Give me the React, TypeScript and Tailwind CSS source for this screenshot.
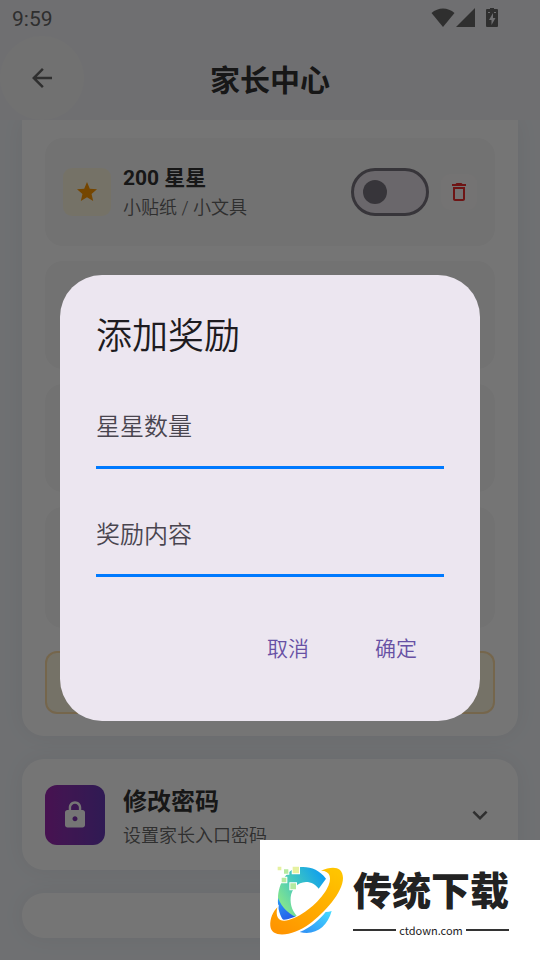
import { useState } from 'react';
import {
  MdArrowBack,
  MdDeleteOutline,
  MdExpandMore,
  MdLock,
  MdStar,
} from 'react-icons/md';

function StatusBar() {
  return (
    <div className="flex h-9 items-center justify-between pl-3 pr-[42px] text-[#666]">
      <span className="pt-[2px] font-[Roboto] text-[21px] leading-9">9:59</span>
      <div className="flex items-center">
        <svg width="24" height="20" viewBox="0 0 24 20" fill="currentColor">
          <path d="M12 19 0.5 5C7-1 17-1 23.5 5z" />
        </svg>
        <svg className="ml-px" width="20" height="20" viewBox="0 0 20 20" fill="currentColor">
          <path d="M0 19 19 0v19z" />
        </svg>
        <svg className="ml-[10px]" width="12" height="20" viewBox="0 0 12 20">
          <path fill="currentColor" d="M4 0h4v1h3q1 0 1 1v16q0 1-1 1H1q-1 0-1-1V2q0-1 1-1h3z" />
          <path fill="#f2f2f7" d="M7 5 3 12h2.5v5L9.5 10H7zM2 4h2v1H2zM8 4h2v1H8z" />
        </svg>
      </div>
    </div>
  );
}

function RewardRow() {
  const [enabled, setEnabled] = useState(false);

  return (
    <div className="flex h-[108px] items-center rounded-[18px] bg-[#f8f8f8] px-[18px]">
      <div className="flex size-12 items-center justify-center rounded-[9px] bg-[#fff8e1] text-[#ff9800]">
        <MdStar size={24} />
      </div>
      <div className="ml-3 flex-1">
        <div className="text-[21px] leading-8 font-bold text-[#333]">200 星星</div>
        <div className="text-[18px] leading-7 font-[350] text-[#666]">小贴纸 / 小文具</div>
      </div>
      <button
        type="button"
        role="switch"
        aria-checked={enabled}
        aria-label="200 星星"
        onClick={() => setEnabled(!enabled)}
        className="flex h-12 w-[78px] items-center rounded-full border-3 border-[#79747e] bg-[#e6e0e9] px-[9px]"
      >
        <span className={enabled ? 'ml-auto size-6 rounded-full bg-[#6750a4]' : 'size-6 rounded-full bg-[#79747e]'} />
      </button>
      <button
        type="button"
        aria-label="删除"
        className="ml-3 flex size-9 items-center justify-center rounded-[9px] bg-[#fdfafa] text-[#f02f2f]"
      >
        <MdDeleteOutline size={24} />
      </button>
    </div>
  );
}

function Field({ label }: { label: string }) {
  const [value, setValue] = useState('');

  return (
    <input
      type="text"
      aria-label={label}
      placeholder={label}
      value={value}
      onChange={e => setValue(e.target.value)}
      className="block h-[86px] w-full border-b-3 border-[#007aff] bg-transparent pt-1 text-[24px] font-[350] text-[#1d1b20] outline-none placeholder:text-[#49454f]"
    />
  );
}

function AddRewardDialog() {
  return (
    <div className="absolute inset-0 z-10 flex items-center justify-center bg-black/54 px-[60px] pt-9">
      <div role="dialog" aria-labelledby="dialog-title" className="w-full rounded-[42px] bg-[#ece6f0] p-9">
        <h2 id="dialog-title" className="text-[36px] leading-[52px] font-[350] text-[#1d1b20]">
          添加奖励
        </h2>
        <div className="mt-5 flex flex-col gap-[22px]">
          <Field label="星星数量" />
          <Field label="奖励内容" />
        </div>
        <div className="mt-9 flex justify-end gap-3 text-[21px] font-[350] text-[#6750a4]">
          <button type="button" className="h-[72px] px-[27px] pt-[2px]">取消</button>
          <button type="button" className="h-[72px] px-[27px] pt-[2px]">确定</button>
        </div>
      </div>
    </div>
  );
}

function Logo() {
  return (
    <svg width="80" height="76" viewBox="24 40 240 228" className="shrink-0">
      <defs>
        <linearGradient id="ring" x1="0.8" y1="0" x2="0.2" y2="1">
          <stop offset="0" stopColor="#ffc400" />
          <stop offset="1" stopColor="#ff9500" />
        </linearGradient>
        <linearGradient id="arc" x1="1" y1="0.2" x2="0.1" y2="0.8">
          <stop offset="0" stopColor="#0d9df0" />
          <stop offset="0.5" stopColor="#3cc4c4" />
          <stop offset="1" stopColor="#86e68c" />
        </linearGradient>
        <linearGradient id="deep" x1="0" y1="0" x2="0.6" y2="1">
          <stop offset="0" stopColor="#2b9cf5" />
          <stop offset="1" stopColor="#2454e8" />
        </linearGradient>
        <linearGradient id="sky" x1="0" y1="1" x2="1" y2="0">
          <stop offset="0" stopColor="#2e8df5" />
          <stop offset="1" stopColor="#45dcff" />
        </linearGradient>
      </defs>
      <path fill="url(#arc)" d="M198 84C178 57 152 47 122 49C82 53 54 98 54 144C60 178 84 198 118 204C98 186 90 164 92 140C95 115 112 95 138 94C154 94 167 102 176 114z" />
      <path fill="url(#deep)" d="M54 142C52 174 60 198 75 216L122 204C88 194 66 172 54 142z" />
      <path fill="url(#sky)" d="M119 244C153 230 178 208 197 184Q207 184 215 181C202 228 166 256 119 244z" />
      <path
        fill="url(#ring)"
        stroke="#fff"
        strokeWidth="6"
        paintOrder="stroke"
        d="M183 60C216 46 248 46 249 82C249 126 192 188 148 220C104 254 34 266 31 226C29 204 40 182 52 170C44 206 62 215 86 208C130 196 178 154 200 116C218 84 212 60 183 60z"
      />
      <g stroke="#fff" strokeWidth="6" paintOrder="stroke">
        <path fill="#e6f1a0" d="M53 48h11v11H53zM98 48h19v20H98z" />
        <path fill="#b4eaa0" d="M72 56h13v13H72zM65 81h14v14H65zM91 98h17v18H91z" />
      </g>
    </svg>
  );
}

function DownloadBadge() {
  return (
    <div className="absolute right-0 bottom-0 z-20 flex h-[120px] w-[280px] items-center bg-white pt-1 pl-2 text-[#222]">
      <Logo />
      <div className="ml-[5px] w-[156px]">
        <div className="text-[39px] leading-[52px] font-black whitespace-nowrap">传统下载</div>
        <div className="mt-1 flex items-center gap-[3px]">
          <span className="h-[2px] flex-1 bg-[#333]" />
          <span className="font-['Noto_Sans_CJK_SC',sans-serif] text-[11px] leading-4">ctdown.com</span>
          <span className="h-[2px] flex-1 bg-[#333]" />
        </div>
      </div>
    </div>
  );
}

export default function App() {
  return (
    <div className="relative flex min-h-screen flex-col overflow-hidden bg-[#f1f4f9] font-[Roboto,'Noto_Sans_CJK_SC',sans-serif]">
      <header className="z-1 bg-[#f2f2f6]">
        <StatusBar />
        <div className="grid h-[84px] grid-cols-[84px_1fr_84px] items-center">
          <button
            type="button"
            aria-label="返回"
            className="flex size-[84px] items-center justify-center rounded-full bg-[#f7f7f7] text-[#666]"
          >
            <MdArrowBack size={30} />
          </button>
          <h1 className="pt-[6px] text-center text-[30px] leading-10 font-bold text-[#333]">家长中心</h1>
        </div>
      </header>

      <main className="flex flex-col gap-[23px] px-[22px]">
        <section className="rounded-b-[22px] bg-white px-[23px] pt-[18px] pb-[22px] shadow-[0_0_24px_rgba(0,0,0,0.05)]">
          <div className="flex flex-col gap-[15px]">
            <RewardRow />
            <div className="h-[108px] rounded-[18px] bg-[#f8f8f8]" />
            <div className="h-[108px] rounded-[18px] bg-[#f8f8f8]" />
            <div className="h-[121px] rounded-[18px] bg-[#f8f8f8]" />
          </div>
          <button
            type="button"
            aria-label="添加奖励"
            className="mt-[23px] block h-[63px] w-full rounded-xl border-2 border-[#ffb74d]/40 bg-[#fff8e1]"
          />
        </section>

        <section className="flex h-[111px] items-center rounded-[22px] bg-white px-[23px] shadow-[0_0_24px_rgba(0,0,0,0.05)]">
          <div className="flex size-[60px] items-center justify-center rounded-xl bg-linear-to-r from-[#9c27b0] to-[#673ab7] text-white">
            <MdLock size={30} />
          </div>
          <div className="ml-[18px] flex-1 pt-[6px]">
            <div className="text-[24px] leading-9 font-bold text-[#333]">修改密码</div>
            <div className="text-[18px] leading-8 font-[350] text-[#666]">设置家长入口密码</div>
          </div>
          <button type="button" aria-label="展开" className="text-[#666]">
            <MdExpandMore size={30} />
          </button>
        </section>

        <section className="h-[45px] rounded-[22px] bg-white shadow-[0_0_24px_rgba(0,0,0,0.05)]" />
      </main>

      <AddRewardDialog />
      <DownloadBadge />
    </div>
  );
}
